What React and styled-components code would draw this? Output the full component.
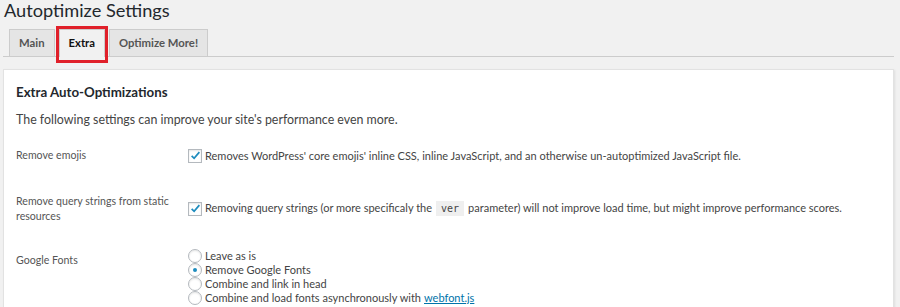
import React from "react";
import styled, { createGlobalStyle } from "styled-components";

const Global = createGlobalStyle`
  body {
    margin: 0;
    background: #f1f1f1;
    font-family: Lato, "Open Sans", sans-serif;
    color: #444;
    overflow: hidden;
  }
`;

const Page = styled.div`
  padding: 0 6px 0 3px;
`;

const Title = styled.h1`
  margin: -3px 0 0 1px;
  font-size: 18.2px;
  font-weight: 400;
  line-height: 27px;
  color: #23282d;
`;

const Tabs = styled.div`
  display: flex;
  gap: 4px;
  margin-top: 5px;
  padding-left: 6px;
  border-bottom: 1px solid #ccc;
`;

const Tab = styled.div`
  position: relative;
  padding: 0 9px;
  height: 26px;
  line-height: 26px;
  font-size: 11.3px;
  font-weight: 700;
  color: ${p => (p.active ? "#111" : "#555")};
  background: ${p => (p.active ? "#f1f1f1" : "#e5e5e5")};
  border: 1px solid #ccc;
  border-bottom: none;
  margin-bottom: ${p => (p.active ? "-1px" : "0")};
  padding-bottom: ${p => (p.active ? "1px" : "0")};
`;

const Marker = styled.span`
  position: absolute;
  left: -4px;
  right: -4px;
  top: -4px;
  bottom: -6px;
  border: 3px solid #e0202a;
  pointer-events: none;
`;

const Panel = styled.div`
  margin-top: 12px;
  background: #fff;
  border: 1px solid #e2e2e2;
  box-shadow: 1px 1px 2px rgba(0, 0, 0, 0.08);
  padding: 0 12px 20px;
`;

const Heading = styled.h2`
  margin: 12px 0 0;
  font-size: 13.3px;
  font-weight: 700;
  line-height: 20px;
  color: #23282d;
`;

const Lead = styled.p`
  margin: 8px 0 0;
  font-size: 12.4px;
  line-height: 20px;
  color: #444;
`;

const Row = styled.div`
  display: grid;
  grid-template-columns: 172px 1fr;
  align-items: ${p => p.align || "center"};
  min-height: ${p => p.h || "53px"};
  margin-top: ${p => p.mt || "0"};
`;

const Label = styled.div`
  font-size: 10.6px;
  line-height: 15px;
  color: #555;
  padding-right: 4px;
  padding-top: ${p => p.pt || "0"};
`;

const Field = styled.label`
  display: flex;
  align-items: center;
  font-size: 11px;
  line-height: 14px;
  color: #444;
  white-space: nowrap;
`;

const Box = styled.span`
  width: 12px;
  height: 12px;
  border: 1px solid #b4b9be;
  box-shadow: inset 0 1px 2px rgba(0, 0, 0, 0.1);
  background: #fff;
  margin-right: 3px;
  flex: none;
  display: flex;
  align-items: center;
  justify-content: center;
`;

const Radio = styled(Box)`
  border-radius: 50%;
  &::after {
    content: "";
    display: ${p => (p.checked ? "block" : "none")};
    width: 4px;
    height: 4px;
    border-radius: 50%;
    background: #1e8cbe;
  }
`;

const Code = styled.code`
  font-family: "DejaVu Sans Mono", monospace;
  font-size: 10px;
  background: #efefef;
  padding: 2px 5px;
  margin: 0 4px;
`;

const Stack = styled.div`
  display: flex;
  flex-direction: column;
`;

const Link = styled.a`
  color: #0073aa;
  text-decoration: underline;
  margin-left: 3px;
`;

const Check = () => (
  <Box>
    <svg width="11" height="11" viewBox="0 0 20 20">
      <path d="M3 10.5l4.5 4.5L17 4" fill="none" stroke="#1e8cbe" strokeWidth="3.2" />
    </svg>
  </Box>
);

const radios = [
  ["Leave as is", false],
  ["Remove Google Fonts", true],
  ["Combine and link in head", false],
  ["Combine and load fonts asynchronously with", false],
];

export default function App() {
  return (
    <Page>
      <Global />
      <Title>Autoptimize Settings</Title>
      <Tabs>
        <Tab>Main</Tab>
        <Tab active>
          Extra
          <Marker />
        </Tab>
        <Tab>Optimize More!</Tab>
      </Tabs>
      <Panel>
        <Heading>Extra Auto-Optimizations</Heading>
        <Lead>The following settings can improve your site's performance even more.</Lead>
        <Row mt="-1px">
          <Label>Remove emojis</Label>
          <Field>
            <Check />
            <span>
              Removes WordPress' core emojis' inline CSS, inline JavaScript, and an otherwise un-autoptimized JavaScript file.
            </span>
          </Field>
        </Row>
        <Row>
          <Label>Remove query strings from static resources</Label>
          <Field>
            <Check />
            <span>
              Removing query strings (or more specificaly the<Code>ver</Code>parameter) will not improve load time, but might improve performance scores.
            </span>
          </Field>
        </Row>
        <Row align="start" mt="14px">
          <Label pt="4px">Google Fonts</Label>
          <Stack>
            {radios.map(([text, on], i) => (
              <Field key={text}>
                <Radio checked={on} />
                <span>
                  {text}
                  {i === 3 && <Link href="#">webfont.js</Link>}
                </span>
              </Field>
            ))}
          </Stack>
        </Row>
      </Panel>
    </Page>
  );
}
